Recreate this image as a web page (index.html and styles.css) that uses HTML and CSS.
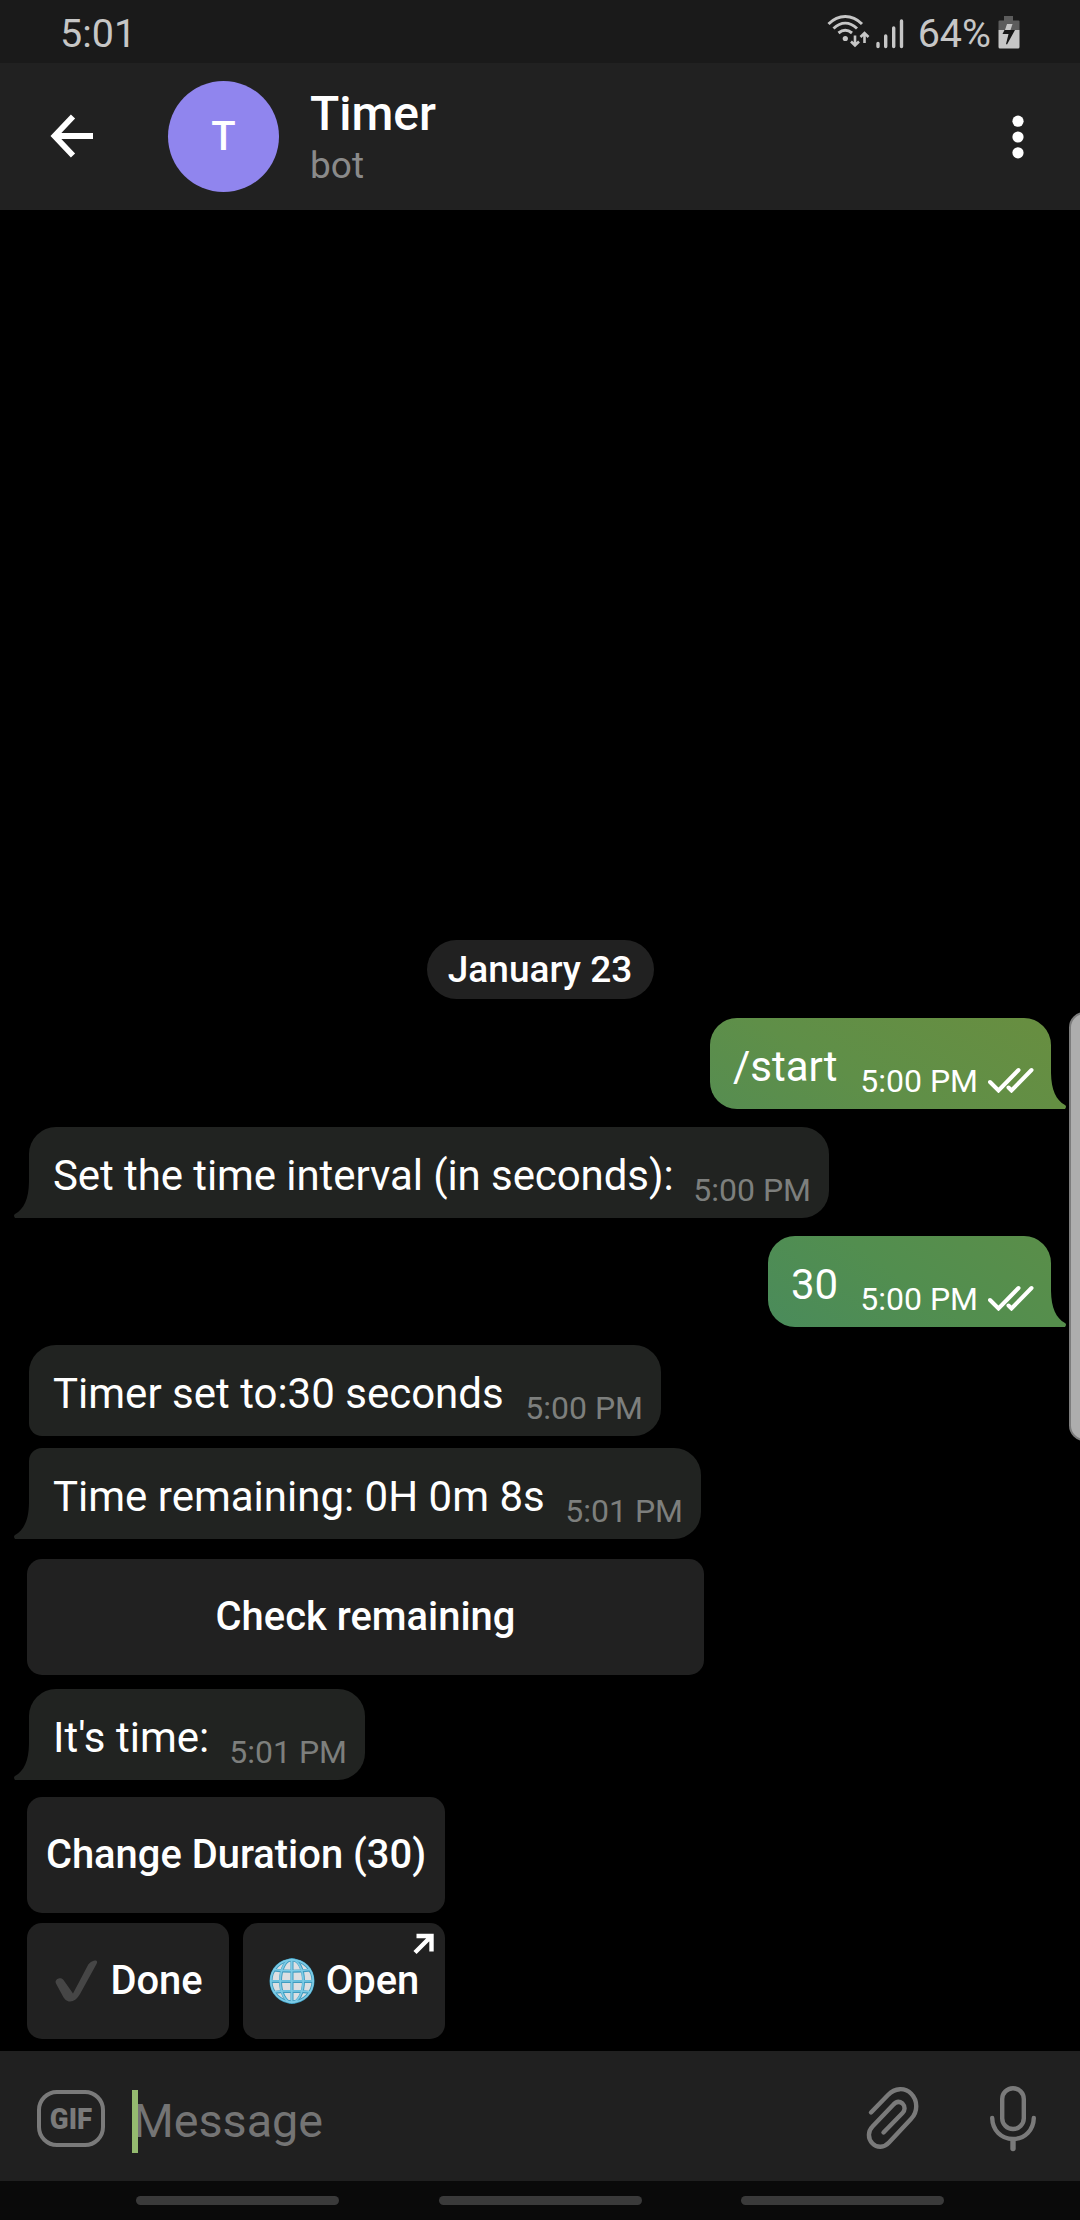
FILE: index.html
```html
<!DOCTYPE html>
<html lang="en">
<head>
<meta charset="utf-8">
<title>Timer</title>
<link rel="stylesheet" href="styles.css">
</head>
<body>
<div class="status">
  <span class="clock">5:01</span>
  <div class="status-icons">
    <svg class="wifi" width="44" height="34" viewBox="0 0 44 34" fill="none" stroke="#c6c6c6" stroke-width="3">
      <path d="M1.500 10C11.500 0 25 0 35 10M6.500 14.500C14 7.500 22.500 7.500 30 14.500M11.500 19C16 15.300 20.500 15.300 25 19"/>
      <circle cx="18.300" cy="24.500" r="2.600" fill="#c6c6c6" stroke="none"/>
      <path d="M28 21.500V31M24 27.500L28 31.500L32 27.500M37.500 29V19.500M33.500 23L37.500 19L41.500 23" stroke-width="2.600"/>
    </svg>
    <svg class="signal" width="28" height="32" viewBox="0 0 28 32" stroke="#c6c6c6" stroke-width="3.400" stroke-linecap="round">
      <path d="M2 25.500V28.500M9.700 18V28.500M17.700 10V28.500M25.500 3V28.500"/>
    </svg>
    <span class="percent">64%</span>
    <svg class="battery" width="22" height="34" viewBox="0 0 22 34">
      <path d="M6 1h9v4.500h5.500q1 0 1 1V15H.5V6.500q0-1 1-1H6z" fill="#5c5c5c"/>
      <path d="M.5 15h21v17q0 1.500-1.500 1.500H2Q.5 33.500.5 32z" fill="#c6c6c6"/>
      <path d="M9 9h5.500l-2 6H7z" fill="#c6c6c6"/>
      <path d="M6.500 15H17L9 29.500 8 29l2.500-10H4.500z" fill="#161616"/>
    </svg>
  </div>
</div>
<header class="header">
  <svg class="back" width="44" height="44" viewBox="0 0 44 44" fill="none" stroke="#fff" stroke-width="5.800"><path d="M43 22H5M23 2.500L4.500 22L23 41.500"/></svg>
  <div class="avatar">T</div>
  <div class="peer"><div class="name">Timer</div><div class="kind">bot</div></div>
  <svg class="more" width="12" height="44" viewBox="0 0 12 44" fill="#fff"><circle cx="6" cy="6.200" r="5.600"/><circle cx="6" cy="22" r="5.600"/><circle cx="6" cy="37.800" r="5.600"/></svg>
</header>
<main class="chat">
  <div class="date">January 23</div>
  <div class="msg out out-a">
    <span class="text">/start</span><span class="time">5:00 PM</span>
    <svg class="ticks" width="46" height="26" viewBox="0 0 46 26"><path d="M2 15L10.500 23.500L30.500 3M20.500 20.500L23.500 23.500L43.500 3"/></svg>
    <svg class="tail tail-right" width="15" height="36" viewBox="0 0 15 36"><path d="M0 0C.3 17 5 27 14 32Q16 33 14 36H0z" fill="#648f42"/></svg>
  </div>
  <div class="msg in w-interval">
    <span class="text">Set the time interval (in seconds):</span><span class="time">5:00 PM</span>
    <svg class="tail tail-left" width="15" height="36" viewBox="0 0 15 36"><path d="M15 0C14.700 17 10 27 1 32Q-1 33 1 36H15z" fill="#212321"/></svg>
  </div>
  <div class="msg out out-b">
    <span class="text">30</span><span class="time">5:00 PM</span>
    <svg class="ticks" width="46" height="26" viewBox="0 0 46 26"><path d="M2 15L10.500 23.500L30.500 3M20.500 20.500L23.500 23.500L43.500 3"/></svg>
    <svg class="tail tail-right" width="15" height="36" viewBox="0 0 15 36"><path d="M0 0C.3 17 5 27 14 32Q16 33 14 36H0z" fill="#558e4c"/></svg>
  </div>
  <div class="msg in grouped-first w-set">
    <span class="text">Timer set to:30 seconds</span><span class="time">5:00 PM</span>
  </div>
  <div class="msg in grouped-last w-remaining">
    <span class="text">Time remaining: 0H 0m 8s</span><span class="time">5:01 PM</span>
    <svg class="tail tail-left" width="15" height="36" viewBox="0 0 15 36"><path d="M15 0C14.700 17 10 27 1 32Q-1 33 1 36H15z" fill="#212321"/></svg>
  </div>
  <div class="keyboard kb-wide"><div class="key">Check remaining</div></div>
  <div class="msg in w-time">
    <span class="text">It's time:</span><span class="time">5:01 PM</span>
    <svg class="tail tail-left" width="15" height="36" viewBox="0 0 15 36"><path d="M15 0C14.700 17 10 27 1 32Q-1 33 1 36H15z" fill="#212321"/></svg>
  </div>
  <div class="keyboard kb-narrow">
    <div class="key full">Change Duration (30)</div>
    <div class="key">
      <svg class="emoji" width="46" height="46" viewBox="0 0 46 46"><path d="M3 25.500C1 21 8 18.500 10.500 22L20 35.500L34.500 8C36.500 4 40 2.500 43 2.500Q45 3 43.500 6L27 36C24.500 40.500 21 43.500 17 43.500C13.500 43.500 11.500 41 10 38.500Z" fill="#464646"/></svg>
      <span>Done</span>
    </div>
    <div class="key">
      <svg class="emoji" width="46" height="46" viewBox="0 0 46 46">
        <circle cx="23" cy="23" r="21.500" fill="#dcdfe2"/>
        <g fill="none" stroke="#3f9cc0" stroke-width="3"><path d="M23 1V45M1 23.500H45M4.500 12Q23 14.500 41.500 12M4.500 34.500Q23 32 41.500 34.500"/><ellipse cx="23" cy="23" rx="11.500" ry="21.500"/><circle cx="23" cy="23" r="21"/></g>
        <g fill="none" stroke="#7ccbe6" stroke-width="1.700"><path d="M22.700 1V45M1 23H45M4.500 11.500Q23 14 41.500 11.500M4.500 34Q23 31.500 41.500 34"/><ellipse cx="22.700" cy="23" rx="11.500" ry="21.500"/><circle cx="23" cy="23" r="21.200"/></g>
      </svg>
      <span>Open</span>
      <svg class="link" width="22" height="22" viewBox="0 0 22 22" fill="none" stroke="#fff" stroke-width="4.400"><path d="M3.500 3H18.500V18.500M18.500 3L2 19.500"/></svg>
    </div>
  </div>
</main>
<footer class="composer">
  <div class="gif"><span>GIF</span></div>
  <div class="caret"></div>
  <div class="placeholder">Message</div>
  <svg class="clip" width="56" height="64" viewBox="0 0 56 64" fill="none" stroke="#7a7a7a" stroke-width="4.400" stroke-linecap="round"><path d="M6 26.500L23 9C30 1.500 40 1.500 46 7.500C53 14.500 53 26 46 33L24 56.500C19 62 12 62 7.500 57.500C2.500 52.500 3 45 7.500 40.500L28 19C31.500 15 35 15.500 37.500 17.500C40.500 20.500 40 24.500 37.500 27L18.500 46.500"/></svg>
  <svg class="mic" width="48" height="68" viewBox="0 0 48 68" fill="none" stroke="#7a7a7a" stroke-width="4.400" stroke-linecap="round"><rect x="13.200" y="3.200" width="21.600" height="40.800" rx="10.800"/><path d="M3.200 33C3.500 45 12 54 24 54S44.500 45 44.800 33"/><path d="M24 55V63.500" stroke-width="5.400"/></svg>
</footer>
<nav class="nav"><i></i><i></i><i></i></nav>
<div class="edge-panel"></div>
</body>
</html>
```
FILE: styles.css
```css
* { box-sizing: border-box; }
body {
  margin: 0;
  width: 1080px;
  height: 2220px;
  display: flex;
  flex-direction: column;
  position: relative;
  overflow: hidden;
  background: #000;
  color: #fff;
  font-family: Roboto, "Liberation Sans", sans-serif;
}
svg { display: block; flex: none; }

.status {
  height: 63px;
  padding: 4px 60px 0 60px;
  display: flex;
  justify-content: space-between;
  align-items: center;
  background: #1a1a1a;
  color: #c6c6c6;
  font-size: 39.5px;
  line-height: 64px;
}
.status-icons { display: flex; align-items: center; }
.wifi { margin: 0 5px 5px 0; }
.signal { margin-right: 14px; }
.percent { margin-right: 7px; }
.battery { margin-bottom: 3px; }

.header {
  height: 147px;
  padding: 0 56px 0 50px;
  display: flex;
  align-items: center;
  background: #212121;
}
.back { margin-bottom: 1px; }
.avatar {
  width: 111px;
  height: 111px;
  margin: 0 31px 0 74px;
  border-radius: 50%;
  background: #9085ee;
  font-size: 40px;
  font-weight: 500;
  line-height: 111px;
  text-align: center;
}
.peer { flex: 1; }
.name { font-size: 48px; font-weight: 500; line-height: 56px; }
.kind { font-size: 37px; line-height: 44px; color: #8a8a8a; margin-top: 2px; }

.chat {
  flex: 1;
  display: flex;
  flex-direction: column;
  justify-content: flex-end;
  align-items: flex-start;
  padding: 0 29px 12px;
}
.date {
  align-self: center;
  width: 227px;
  height: 59px;
  margin-bottom: 19px;
  border-radius: 30px;
  background: #212121;
  font-size: 37px;
  font-weight: 500;
  line-height: 59px;
  text-align: center;
}
.msg {
  position: relative;
  height: 91px;
  margin-bottom: 18px;
  padding: 0 18px 0 24px;
  display: flex;
  justify-content: space-between;
  align-items: flex-end;
  border-radius: 27px;
  white-space: nowrap;
}
.text { font-size: 42px; line-height: 50px; margin-bottom: 17px; }
.time { font-size: 32px; line-height: 38px; margin-bottom: 9px; }
.in { background: #212321; border-bottom-left-radius: 0; }
.in .time { color: #7d7f7d; }
.out { align-self: flex-end; border-bottom-right-radius: 0; padding-left: 23px; }
.out .time { margin-left: auto; margin-right: 10px; }
.out-a { width: 341px; background: linear-gradient(30deg, #568d51, #5f8f48 40%, #688e40); }
.out-b { width: 283px; background: linear-gradient(35deg, #4a8b5b, #528e4f 50%, #5a8e49); }
.out-a, .out-b { padding-right: 17px; }
.grouped-first { margin-bottom: 12px; border-bottom-left-radius: 13px; }
.grouped-last { border-top-left-radius: 13px; }
.w-interval { width: 800px; }
.w-interval .text { letter-spacing: -0.08px; }
.w-set { width: 632px; }
.w-remaining { width: 672px; margin-bottom: 20px; }
.w-time { width: 336px; margin-bottom: 17px; }
.tail { position: absolute; bottom: 0; }
.tail-left { left: -15px; }
.tail-right { right: -15px; }
.ticks { margin-bottom: 16px; fill: none; stroke: #fff; stroke-width: 4; stroke-linecap: round; }

.keyboard {
  display: grid;
  gap: 10px 14px;
  margin-left: -2px;
}
.kb-wide { width: 677px; margin-bottom: 14px; }
.kb-narrow { width: 418px; grid-template-columns: 1fr 1fr; }
.key {
  position: relative;
  height: 116px;
  display: flex;
  align-items: center;
  justify-content: center;
  gap: 11px;
  border-radius: 15px;
  background: #212121;
  font-size: 39.9px;
  font-weight: 500;
  line-height: 116px;
  white-space: nowrap;
}
.full { grid-column: 1 / 3; }
.link { position: absolute; top: 10px; right: 10px; }

.composer {
  height: 130px;
  padding: 0 43px 0 37px;
  display: flex;
  align-items: center;
  background: #202020;
}
.gif {
  width: 68px;
  height: 57px;
  margin-top: 4px;
  border: 4.5px solid #7a7a7a;
  border-radius: 20px;
  color: #7a7a7a;
  font-size: 30px;
  font-weight: 900;
  line-height: 50px;
  text-align: center;
}
.gif span { display: block; transform: scaleX(0.92); }
.caret { position: relative; z-index: 1; width: 6px; height: 63px; margin: 10px 0 0 27px; background: #94ba6f; }
.placeholder { flex: 1; margin: 9px 0 0 -5px; font-size: 46.7px; line-height: 56px; color: #747474; }
.clip { margin-right: 68px; margin-top: 4px; }
.mic { margin-top: 5px; }

.nav {
  height: 39px;
  padding: 15px 136px;
  display: flex;
  justify-content: space-between;
  background: #0a0a0a;
}
.nav i { width: 203px; height: 9px; border-radius: 5px; background: #3a3a3a; }

.edge-panel {
  position: absolute;
  top: 1012px;
  right: -20px;
  width: 31px;
  height: 429px;
  border: 2px solid #7c7c7c;
  border-radius: 16px;
  background: #adadad;
}
```
